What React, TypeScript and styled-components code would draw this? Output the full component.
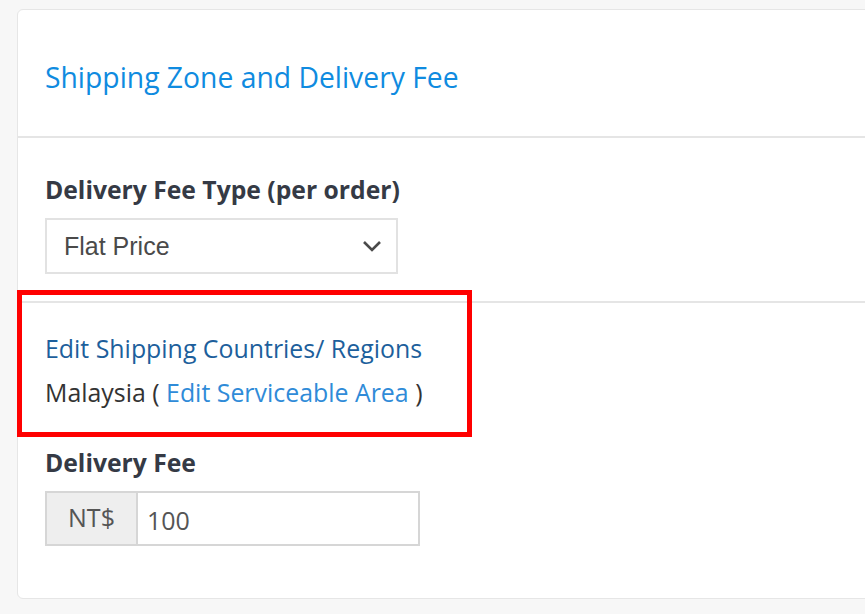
import React from "react";
import styled, { createGlobalStyle } from "styled-components";

const Global = createGlobalStyle`
  html, body {
    margin: 0;
    padding: 0;
    background: #f7f7f7;
    overflow: hidden;
    font-family: "Open Sans", "Liberation Sans", sans-serif;
  }
`;

const Page = styled.div`
  padding: 9px 0 0 17px;
  width: 865px;
  height: 614px;
  box-sizing: border-box;
`;

const Card = styled.div`
  position: relative;
  width: 900px;
  background: #fff;
  border: 1px solid #e6e6e6;
  border-radius: 6px;
  box-sizing: border-box;
`;

const Header = styled.div`
  height: 128px;
  box-sizing: border-box;
  display: flex;
  align-items: center;
  padding: 8px 27px 0;
  border-bottom: 2px solid #e5e5e5;
`;

const Title = styled.h2`
  margin: 0;
  font-weight: 400;
  font-size: 28.3px;
  line-height: 38px;
  color: #0f8be0;
`;

const Section = styled.div<{ $top: number; $bottom: number; $divider?: boolean }>`
  padding: ${(p) => p.$top}px 27px ${(p) => p.$bottom}px;
  border-bottom: ${(p) => (p.$divider ? "2px solid #e5e5e5" : "none")};
  display: flex;
  flex-direction: column;
  align-items: flex-start;
`;

const Label = styled.div<{ $gap?: number }>`
  font-weight: 700;
  font-size: 24.7px;
  color: #353a45;
  line-height: 32px;
  margin-top: ${(p) => p.$gap ?? 0}px;
  margin-bottom: 12px;
`;

const Select = styled.div`
  width: 353px;
  height: 56px;
  border: 2px solid #e2e2e2;
  box-sizing: border-box;
  display: flex;
  align-items: center;
  justify-content: space-between;
  padding: 0 14px 0 17px;
  font-family: "Liberation Sans", Arial, sans-serif;
  font-size: 25px;
  color: #4a4a4a;
`;

const LinkLine = styled.div`
  font-size: 24.9px;
  line-height: 44px;
  color: #333;
`;

const DarkLink = styled.a`
  color: #1d5f9c;
  text-decoration: none;
`;

const LightLink = styled.a`
  color: #2f8bd8;
  text-decoration: none;
`;

const InputGroup = styled.div`
  display: flex;
  width: 375px;
  height: 55px;
  border: 2px solid #d6d6d6;
  box-sizing: border-box;
`;

const Addon = styled.div`
  width: 91px;
  background: #eeeeee;
  border-right: 2px solid #d6d6d6;
  display: flex;
  align-items: center;
  justify-content: center;
  font-size: 25px;
  color: #555;
  padding-bottom: 4px;
  box-sizing: border-box;
`;

const Value = styled.div`
  flex: 1;
  display: flex;
  align-items: center;
  padding: 2px 0 0 9px;
  font-size: 25px;
  color: #555;
`;

const Highlight = styled.div`
  position: absolute;
  left: -1px;
  top: 280px;
  width: 455px;
  height: 147px;
  border: 5px solid #ff0000;
  box-sizing: border-box;
  pointer-events: none;
`;

export default function App() {
  return (
    <>
      <Global />
      <Page>
        <Card>
          <Header>
            <Title>Shipping Zone and Delivery Fee</Title>
          </Header>
          <Section $top={36} $bottom={27} $divider>
            <Label>Delivery Fee Type (per order)</Label>
            <Select>
              <span>Flat Price</span>
              <svg width="20" height="12" viewBox="0 0 20 12">
                <path d="M2 2 L10 10 L18 2" fill="none" stroke="#4a4a4a" strokeWidth="2.6" />
              </svg>
            </Select>
          </Section>
          <Section $top={23} $bottom={52}>
            <LinkLine>
              <DarkLink>Edit Shipping Countries/ Regions</DarkLink>
            </LinkLine>
            <LinkLine>
              Malaysia ( <LightLink>Edit Serviceable Area</LightLink> )
            </LinkLine>
            <Label $gap={33}>Delivery Fee</Label>
            <InputGroup>
              <Addon>NT$</Addon>
              <Value>100</Value>
            </InputGroup>
          </Section>
          <Highlight />
        </Card>
      </Page>
    </>
  );
}
